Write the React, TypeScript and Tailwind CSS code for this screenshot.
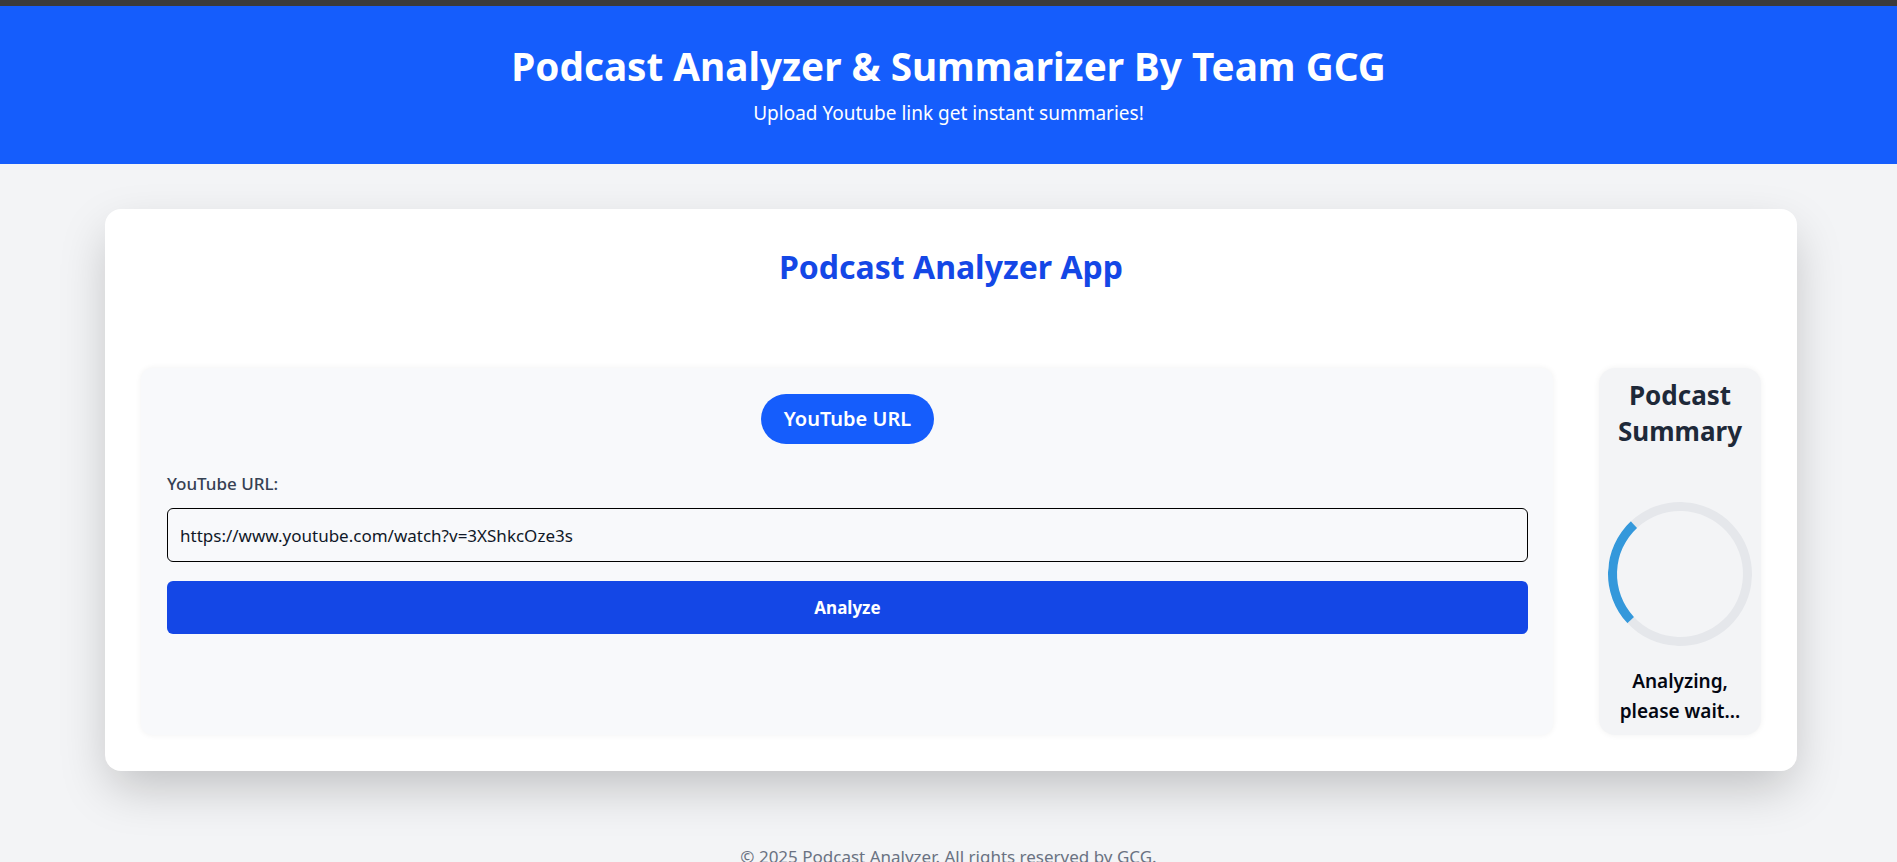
import React from "react";

export default function App() {
  const url = "https://www.youtube.com/watch?v=3XShkcOze3s";

  return (
    <div className="min-h-screen bg-gray-100 font-['Noto_Sans',sans-serif]">
      <div className="h-[6px] bg-[#3b3b3b]" />

      <header className="bg-[#155dfc] text-white text-center pt-[36px] pb-[37px]">
        <h1 className="text-[38.7px] leading-[48px] font-bold">
          Podcast Analyzer &amp; Summarizer By Team GCG
        </h1>
        <p className="mt-[9px] text-[19px] leading-[28px]">
          Upload Youtube link get instant summaries!
        </p>
      </header>

      <main className="pl-[105px] pr-[100px] pt-[45px]">
        <div className="bg-white rounded-2xl px-9 pt-[38px] pb-9 shadow-[0_20px_50px_-5px_rgba(0,0,0,0.22)]">
          <h2 className="text-center text-[32px] leading-[40px] font-bold text-[#1447e6] mb-[81px]">
            Podcast Analyzer App
          </h2>

          <div className="flex items-stretch gap-[46px]">
            {/* input panel */}
            <div className="flex-1 bg-[#f8f9fb] rounded-xl pl-[26px] pr-[25px] pt-[26px] shadow-[0_0_6px_rgba(0,0,0,0.06)]">
              <div className="flex justify-center">
                <button className="bg-[#155dfc] text-white text-[20px] leading-[28px] font-semibold rounded-full px-[23px] py-[11px]">
                  YouTube URL
                </button>
              </div>

              <label className="block mt-[28px] mb-[12px] text-[17px] leading-[24px] font-medium text-gray-700">
                YouTube URL:
              </label>
              <input
                className="w-full h-[54px] border border-black rounded-md bg-transparent px-3 text-[17px] text-gray-900 outline-none"
                defaultValue={url}
              />
              <button className="w-full h-[53px] mt-[19px] bg-[#1447e6] text-white text-[17px] font-bold rounded-md">
                Analyze
              </button>
            </div>

            {/* summary panel */}
            <div className="w-[162px] bg-gray-100 rounded-2xl px-2 pt-[9px] pb-[9px] text-center shadow-[0_0_6px_rgba(0,0,0,0.06)]">
              <h3 className="text-[26px] leading-[36px] font-bold text-[#1e2939]">
                Podcast Summary
              </h3>
              <div className="mx-auto mt-[53px] w-[144px] h-[144px] rounded-full border-[9px] border-[#e5e7eb] border-l-[#3498db] rotate-[2deg]" />
              <p className="mt-[20px] text-[19px] leading-[30px] font-semibold text-gray-950">
                Analyzing, please wait...
              </p>
            </div>
          </div>
        </div>
      </main>

      <footer className="mt-[74px] pb-6 text-center text-[17px] leading-[24px] text-gray-500">
        © 2025 Podcast Analyzer. All rights reserved by GCG.
      </footer>
    </div>
  );
}
